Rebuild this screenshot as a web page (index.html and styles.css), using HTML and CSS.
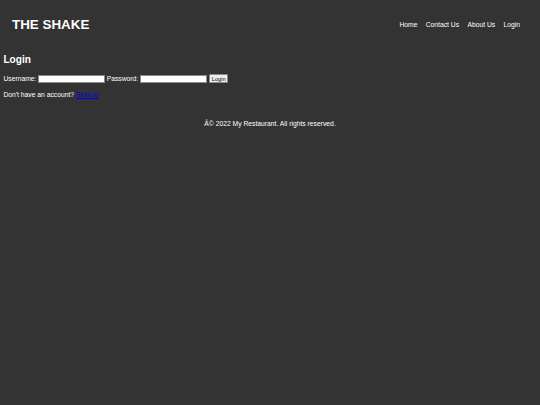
FILE: index.html
```html
<!DOCTYPE html>
<html lang="en">
<head>
<meta charset="utf-8">
<title>Login - The Shake</title>
<link rel="stylesheet" href="styles.css">
</head>
<body>
<header class="site-header">
  <h1 class="brand">THE SHAKE</h1>
  <nav class="nav">
    <a href="#">Home</a>
    <a href="#">Contact Us</a>
    <a href="#">About Us</a>
    <a href="#">Login</a>
  </nav>
</header>
<main class="content">
  <h2 class="title">Login</h2>
  <form class="login-form">
    <label for="u">Username:</label>
    <input id="u" class="field" type="text">
    <label for="p">Password:</label>
    <input id="p" class="field" type="password">
    <button class="btn" type="button">Login</button>
  </form>
  <p class="signup">Don't have an account? <a href="#">Sign up</a></p>
</main>
<footer class="site-footer">Â© 2022 My Restaurant. All rights reserved.</footer>
</body>
</html>
```

FILE: styles.css
```css
html, body {
  margin: 0;
  padding: 0;
  background: #333333;
}
body {
  font-family: "Liberation Sans", Arial, sans-serif;
  color: #ffffff;
  font-size: 6.75px;
  line-height: 8px;
}
.site-header {
  display: flex;
  justify-content: space-between;
  align-items: center;
  padding: 16.5px 20px 16px 12px;
}
.brand {
  margin: 0;
  font-size: 13.4px;
  line-height: 16px;
  font-weight: bold;
}
.nav {
  display: flex;
  gap: 8.3px;
  font-size: 6.75px;
  line-height: 8px;
}
.nav a {
  color: #ffffff;
  text-decoration: none;
}
.content {
  padding: 5.8px 3.4px 0;
}
.title {
  margin: 0;
  font-size: 10.1px;
  line-height: 12px;
  font-weight: bold;
}
.login-form {
  display: flex;
  align-items: center;
  gap: 2px;
  margin-top: 7.5px;
  height: 9.7px;
}
.field {
  box-sizing: border-box;
  width: 66.3px;
  height: 8px;
  margin: 0;
  padding: 0;
  border: 0.5px solid #8a8a8a;
  background: #ffffff;
  font-size: 6.75px;
}
.btn {
  box-sizing: border-box;
  width: 19px;
  height: 9.7px;
  margin: 0 0 0 0.7px;
  padding: 0;
  border: 0.5px solid #8a8a8a;
  border-radius: 1px;
  background: #efefef;
  color: #000000;
  font-family: "Liberation Sans", Arial, sans-serif;
  font-size: 5.6px;
  line-height: 8px;
}
.signup {
  margin: 7.5px 0 0;
}
.signup a {
  color: #0000ee;
  text-decoration: underline;
}
.site-footer {
  margin-top: 21.3px;
  text-align: center;
}
```
